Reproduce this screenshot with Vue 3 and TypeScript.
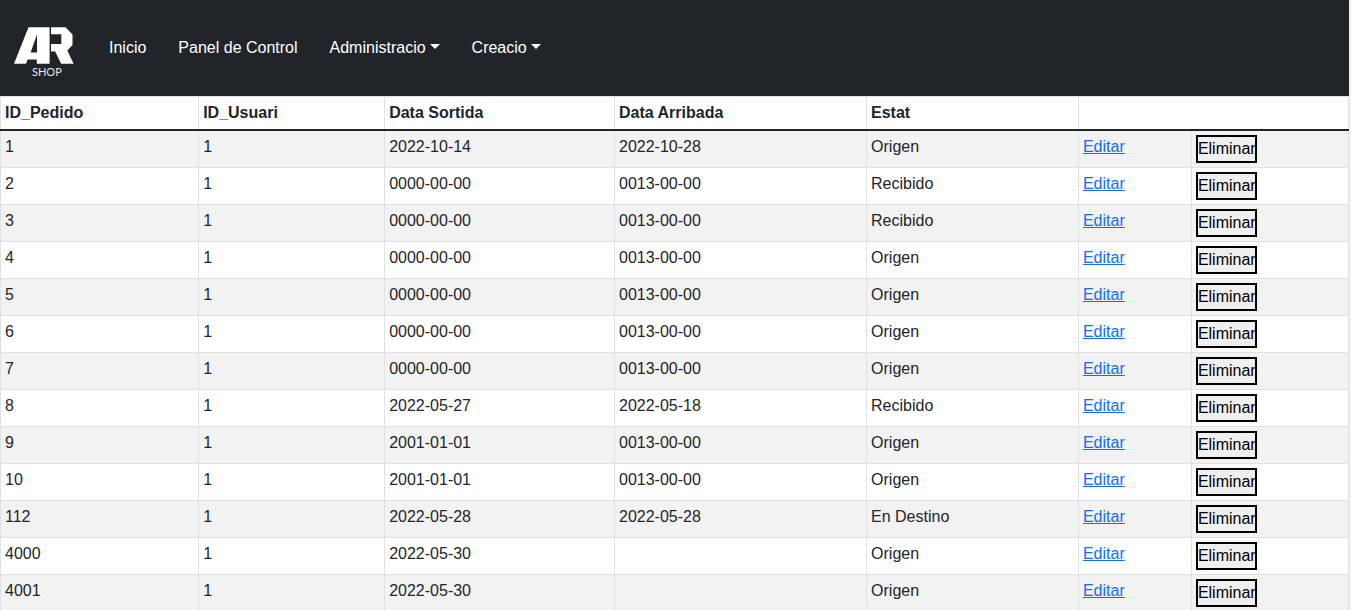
<script setup lang="ts">
interface Order {
  id: number
  user: number
  sent: string
  arrival: string
  status: string
}

const pending = (id: number, status: string, sent = '0000-00-00'): Order => ({
  id,
  user: 1,
  sent,
  arrival: '0013-00-00',
  status,
})

const orders: Order[] = [
  { id: 1, user: 1, sent: '2022-10-14', arrival: '2022-10-28', status: 'Origen' },
  pending(2, 'Recibido'),
  pending(3, 'Recibido'),
  pending(4, 'Origen'),
  pending(5, 'Origen'),
  pending(6, 'Origen'),
  pending(7, 'Origen'),
  { id: 8, user: 1, sent: '2022-05-27', arrival: '2022-05-18', status: 'Recibido' },
  pending(9, 'Origen', '2001-01-01'),
  pending(10, 'Origen', '2001-01-01'),
  { id: 112, user: 1, sent: '2022-05-28', arrival: '2022-05-28', status: 'En Destino' },
  { id: 4000, user: 1, sent: '2022-05-30', arrival: '', status: 'Origen' },
  { id: 4001, user: 1, sent: '2022-05-30', arrival: '', status: 'Origen' },
]
</script>

<template>
  <div class="page">
    <nav class="navbar">
      <a class="brand" href="#" aria-label="AR Shop">
        <svg class="logo" viewBox="0 0 60 52" aria-hidden="true">
          <path
            fill="#fff"
            fill-rule="evenodd"
            d="M14.5 0.3H35.6V36.7H22.8V32.5H13.6L12 36.7H0ZM23 7.5L16.6 25.5H23Z"
          />
          <path
            fill="#fff"
            d="M37 0.3H51.5L58.5 7.5V18L53.3 23.5L59.7 36.7H47.2L41.2 24.5H37V17H47.3V7.3H37Z"
          />
          <text x="18" y="49" class="logo-text">SHOP</text>
        </svg>
      </a>
      <a class="nav-link" href="#">Inicio</a>
      <a class="nav-link" href="#">Panel de Control</a>
      <button class="nav-link caret" type="button">Administracio</button>
      <button class="nav-link caret" type="button">Creacio</button>
    </nav>
    <table class="orders">
      <colgroup>
        <col class="c-id" />
        <col class="c-user" />
        <col class="c-sent" />
        <col class="c-arrival" />
        <col class="c-status" />
        <col class="c-edit" />
        <col />
      </colgroup>
      <thead>
        <tr>
          <th scope="col">ID_Pedido</th>
          <th scope="col">ID_Usuari</th>
          <th scope="col">Data Sortida</th>
          <th scope="col">Data Arribada</th>
          <th scope="col">Estat</th>
          <th colspan="2"></th>
        </tr>
      </thead>
      <tbody>
        <tr v-for="order in orders" :key="order.id">
          <td>{{ order.id }}</td>
          <td>{{ order.user }}</td>
          <td>{{ order.sent }}</td>
          <td>{{ order.arrival }}</td>
          <td>{{ order.status }}</td>
          <td><a class="edit" href="#">Editar</a></td>
          <td><button class="delete" type="button">Eliminar</button></td>
        </tr>
      </tbody>
    </table>
  </div>
</template>

<style>
body {
  margin: 0;
  background: #f1f1f1;
}
</style>

<style scoped>
.page {
  box-sizing: border-box;
  height: 100vh;
  margin-right: 2px;
  overflow: hidden;
  background: #fff;
  color: #212529;
  font: 16px/24px "Liberation Sans", Arial, sans-serif;
}
.navbar {
  display: flex;
  align-items: center;
  height: 96px;
  padding-left: 14px;
  background: #212529;
}
.brand {
  display: flex;
  margin-right: 19px;
  padding-top: 10px;
}
.logo {
  display: block;
  width: 60px;
  height: 52px;
}
.logo-text {
  fill: #e4e5e6;
  font: 11px Lato, sans-serif;
}
.nav-link {
  padding: 8px 16px;
  border: 0;
  background: none;
  color: #fff;
  font: inherit;
  text-decoration: none;
}
.caret::after {
  content: "";
  display: inline-block;
  margin-left: 4px;
  vertical-align: 4px;
  border-top: 5px solid;
  border-right: 5px solid transparent;
  border-left: 5px solid transparent;
}
.orders {
  width: 100%;
  table-layout: fixed;
  border-collapse: collapse;
}
.c-id {
  width: 14.7%;
}
.c-user {
  width: 13.8%;
}
.c-sent {
  width: 17.05%;
}
.c-arrival {
  width: 18.7%;
}
.c-status {
  width: 15.72%;
}
.c-edit {
  width: 8.38%;
}
th,
td {
  padding: 4px;
  border: 1px solid #dee2e6;
  text-align: left;
  vertical-align: top;
}
thead th {
  height: 24px;
  border-bottom: 2px solid #212529;
}
tbody tr:nth-child(odd) {
  background: #f2f2f2;
}
.edit {
  color: #0d6efd;
}
.delete {
  display: block;
  box-sizing: border-box;
  width: 61px;
  height: 28px;
  padding: 0;
  border: 2px solid #000;
  background: #efefef;
  color: #000;
  font: inherit;
}
</style>
